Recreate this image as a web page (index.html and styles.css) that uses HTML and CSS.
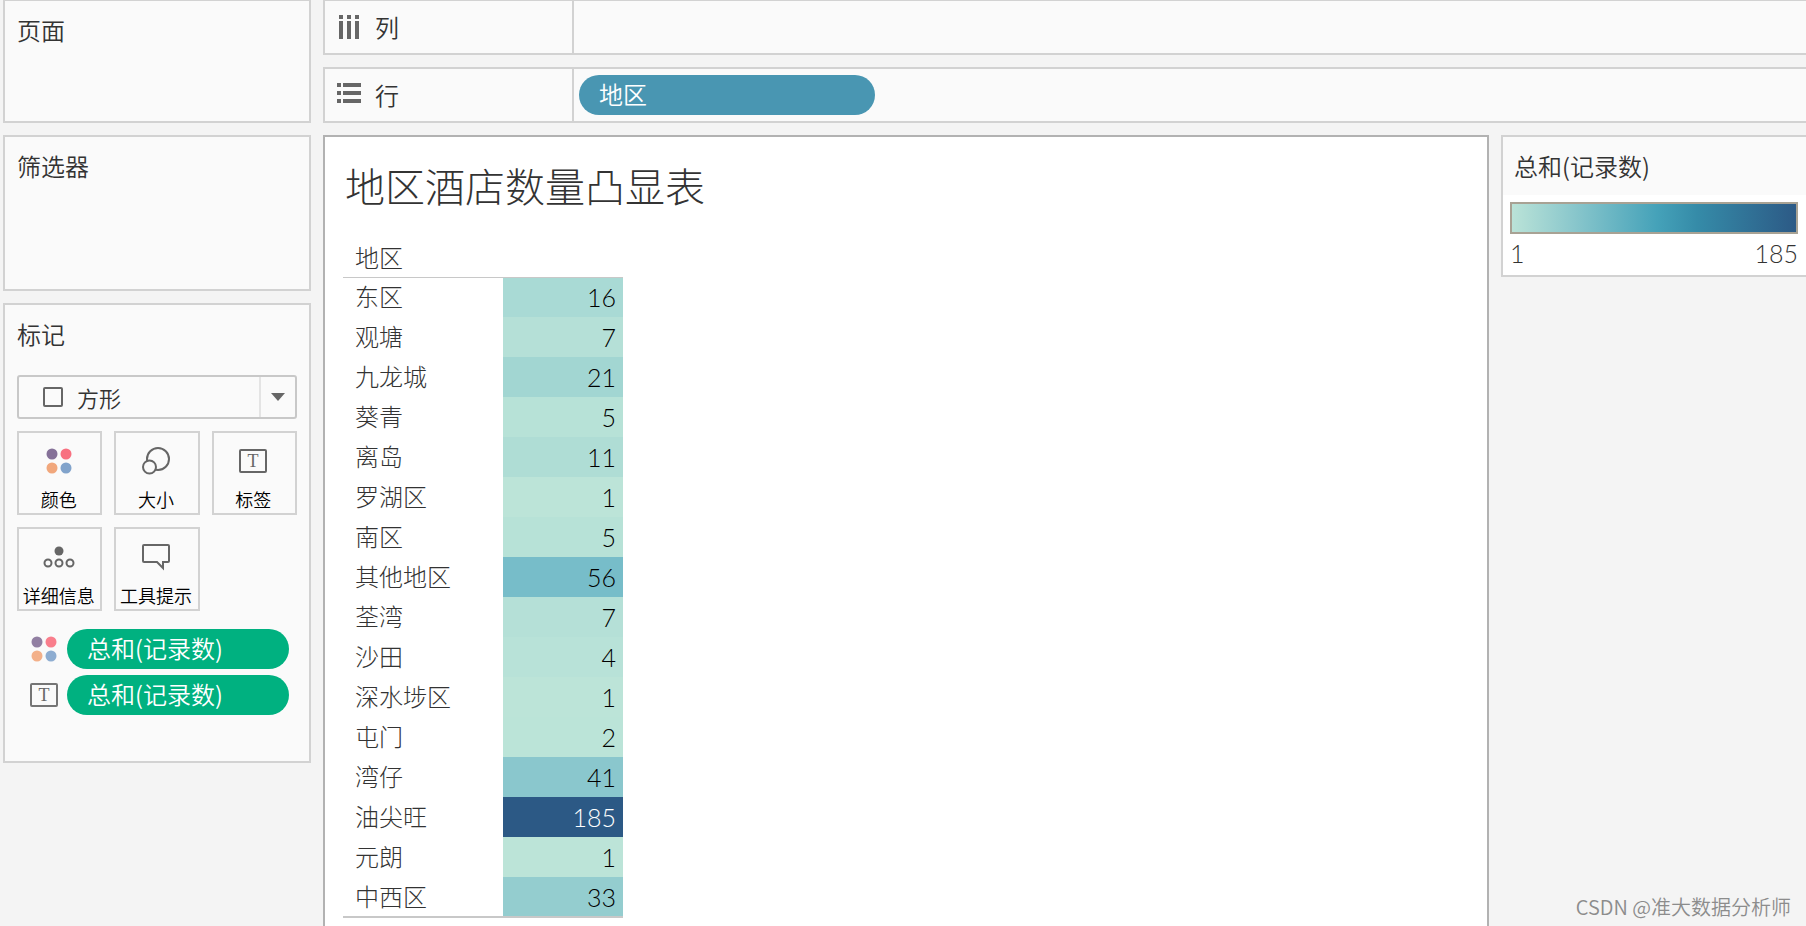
FILE: index.html
```html
<!DOCTYPE html>
<html lang="zh-CN">
<head>
    <meta charset="UTF-8">
    <meta name="viewport" content="width=device-width, initial-scale=1.0">
    <title>地区酒店数量凸显表</title>
    <link rel="stylesheet" href="styles.css">
</head>
<body>

    <div class="workspace">
        <aside class="sidebar">
            <section class="panel pages">
                <h2>页面</h2>
            </section>
            <section class="panel filters">
                <h2>筛选器</h2>
            </section>
            <section class="panel marks">
                <h2><label for="mark-type">标记</label></h2>
                <div class="mark-select">
                    <svg class="square-icon" width="20" height="20" viewBox="0 0 20 20"><rect x="1" y="1" width="18" height="18" rx="1" fill="none" stroke="#666" stroke-width="2"/></svg>
                    <select id="mark-type">
                        <option>方形</option>
                    </select>
                    <span class="arrow"><svg width="14" height="8" viewBox="0 0 14 8"><path d="M0 0h14L7 8z" fill="#666"/></svg></span>
                </div>
                <div class="mark-cards">
                    <button class="card">
                        <svg width="32" height="28" viewBox="0 0 32 28"><circle cx="9" cy="7" r="5.5" fill="#857198"/><circle cx="23" cy="7" r="5.5" fill="#f87080"/><circle cx="9" cy="21" r="5.5" fill="#f1a77c"/><circle cx="23" cy="21" r="5.5" fill="#81a3cb"/></svg>
                        颜色
                    </button>
                    <button class="card">
                        <svg width="32" height="28" viewBox="0 0 32 28"><g fill="#fafafa" stroke="#666" stroke-width="2"><circle cx="18" cy="12" r="11"/><circle cx="9.5" cy="20" r="6.5"/></g></svg>
                        大小
                    </button>
                    <button class="card">
                        <svg width="32" height="28" viewBox="0 0 32 28"><rect x="3" y="3" width="26" height="22" rx="1" fill="none" stroke="#666" stroke-width="2"/><text class="icon-text" x="16" y="20" text-anchor="middle">T</text></svg>
                        标签
                    </button>
                    <button class="card">
                        <svg width="32" height="28" viewBox="0 0 32 28"><circle cx="16" cy="8" r="4.5" fill="#666"/><g fill="none" stroke="#666" stroke-width="2"><circle cx="5" cy="20" r="3.5"/><circle cx="16" cy="20" r="3.5"/><circle cx="27" cy="20" r="3.5"/></g></svg>
                        详细信息
                    </button>
                    <button class="card">
                        <svg width="32" height="28" viewBox="0 0 32 28"><path d="M4 2h24a1 1 0 0 1 1 1v15a1 1 0 0 1-1 1h-5v6l-6-6H4a1 1 0 0 1-1-1V3a1 1 0 0 1 1-1z" fill="none" stroke="#666" stroke-width="2"/></svg>
                        工具提示
                    </button>
                </div>
                <div class="mark-pills">
                    <div class="mark-row">
                        <svg width="32" height="28" viewBox="0 0 32 28"><circle cx="9" cy="7" r="5.5" fill="#917fa2"/><circle cx="23" cy="7" r="5.5" fill="#f97e8c"/><circle cx="9" cy="21" r="5.5" fill="#f3b089"/><circle cx="23" cy="21" r="5.5" fill="#8eadd1"/></svg>
                        <button class="pill measure">总和(记录数)</button>
                    </div>
                    <div class="mark-row">
                        <svg width="32" height="28" viewBox="0 0 32 28"><rect x="3" y="3" width="26" height="22" rx="1" fill="none" stroke="#757575" stroke-width="2"/><text class="icon-text" x="16" y="20" text-anchor="middle">T</text></svg>
                        <button class="pill measure">总和(记录数)</button>
                    </div>
                </div>
            </section>
        </aside>

        <main class="content">
            <div class="shelf columns">
                <div class="shelf-name">
                    <svg width="24" height="24" viewBox="0 0 24 24" fill="#666"><path d="M2 0h4v4H2zM10 0h4v4h-4zM18 0h4v4h-4zM2 6h4v18H2zM10 6h4v18h-4zM18 6h4v18h-4z"/></svg>
                    列
                </div>
            </div>
            <div class="shelf rows">
                <div class="shelf-name">
                    <svg width="24" height="24" viewBox="0 0 24 24" fill="#666"><path d="M0 0h4v4H0zM6 0h18v4H6zM0 8h4v4H0zM6 8h18v4H6zM0 16h4v4H0zM6 16h18v4H6z"/></svg>
                    行
                </div>
                <div class="shelf-fields">
                    <button class="pill dimension">地区</button>
                </div>
            </div>

            <div class="sheet">
                <section class="view">
                    <h1>地区酒店数量凸显表</h1>
                    <table class="highlight-table">
                        <thead>
                            <tr><th>地区</th><td></td></tr>
                        </thead>
                        <tbody>
                            <tr><th>东区</th><td style="background: #a9dad5">16</td></tr>
                            <tr><th>观塘</th><td style="background: #b5e0d7">7</td></tr>
                            <tr><th>九龙城</th><td style="background: #a2d6d2">21</td></tr>
                            <tr><th>葵青</th><td style="background: #b7e2d7">5</td></tr>
                            <tr><th>离岛</th><td style="background: #afddd5">11</td></tr>
                            <tr><th>罗湖区</th><td style="background: #bce4d8">1</td></tr>
                            <tr><th>南区</th><td style="background: #b7e2d7">5</td></tr>
                            <tr><th>其他地区</th><td style="background: #77bdc9">56</td></tr>
                            <tr><th>荃湾</th><td style="background: #b5e0d7">7</td></tr>
                            <tr><th>沙田</th><td style="background: #b8e2d8">4</td></tr>
                            <tr><th>深水埗区</th><td style="background: #bce4d8">1</td></tr>
                            <tr><th>屯门</th><td style="background: #bbe4d8">2</td></tr>
                            <tr><th>湾仔</th><td style="background: #8ac7cd">41</td></tr>
                            <tr><th>油尖旺</th><td class="dark" style="background: #2c5985">185</td></tr>
                            <tr><th>元朗</th><td style="background: #bce4d8">1</td></tr>
                            <tr><th>中西区</th><td style="background: #94cdcf">33</td></tr>
                        </tbody>
                    </table>
                </section>

                <section class="legend">
                    <h2>总和(记录数)</h2>
                    <div class="legend-body">
                        <div class="ramp"></div>
                        <div class="range"><span>1</span><span>185</span></div>
                    </div>
                </section>
            </div>
        </main>
    </div>

    <div class="watermark">CSDN @准大数据分析师</div>

</body>
</html>
```
FILE: styles.css
```css
* {
    box-sizing: border-box;
}
body {
    margin: 0;
    font-family: "Noto Sans CJK SC", sans-serif;
    font-weight: 350;
    font-size: 24px;
    line-height: 32px;
    color: #333;
    background: #f4f4f4;
}
h1, h2 {
    margin: 0;
    font-weight: 350;
}
h2 {
    font-size: 24px;
    line-height: 32px;
}
svg {
    display: block;
    flex: none;
}
button, select {
    font-family: inherit;
    font-weight: 350;
    cursor: pointer;
}
.workspace {
    display: flex;
    gap: 12px;
    height: 100vh;
    padding-left: 3px;
    overflow: hidden;
}

/* left side */
.sidebar {
    flex: none;
    width: 308px;
    display: flex;
    flex-direction: column;
    gap: 12px;
}
.panel {
    flex: none;
    padding: 13px 12px;
    background: #fafafa;
    border: 2px solid #d2d2d2;
}
.pages {
    height: 123px;
    border-top-width: 1px;
}
.filters {
    height: 156px;
}
.marks {
    padding-bottom: 46px;
}
.mark-select {
    position: relative;
    margin: 25px 0 12px;
}
.mark-select select {
    display: block;
    width: 100%;
    height: 44px;
    padding: 0 50px 0 58px;
    font-size: 22px;
    color: #333;
    background: #fafafa;
    border: 2px solid #c8c8c8;
    border-radius: 3px;
    appearance: none;
}
.square-icon {
    position: absolute;
    left: 26px;
    top: 12px;
}
.arrow {
    position: absolute;
    top: 2px;
    right: 2px;
    bottom: 2px;
    width: 36px;
    display: flex;
    align-items: center;
    justify-content: center;
    border-left: 2px solid #e4e4e4;
    pointer-events: none;
}
.mark-cards {
    display: grid;
    grid-template-columns: repeat(3, 1fr);
    gap: 12px;
}
.card {
    display: flex;
    flex-direction: column;
    align-items: center;
    gap: 10px;
    height: 84px;
    padding: 14px 2px 0 0;
    font-size: 18px;
    line-height: 28px;
    white-space: nowrap;
    color: #000;
    background: #fafafa;
    border: 2px solid #d2d2d2;
}
.icon-text {
    font-family: "Liberation Serif", serif;
    font-size: 18px;
    font-weight: 400;
    fill: #666;
}
.mark-pills {
    display: flex;
    flex-direction: column;
    gap: 6px;
    padding: 18px 8px 0 11px;
}
.mark-row {
    display: flex;
    align-items: center;
    gap: 7px;
}
.pill {
    height: 40px;
    padding: 0 20px 2px;
    font-size: 24px;
    line-height: 38px;
    text-align: left;
    color: #fff;
    border: none;
    border-radius: 20px;
}
.measure {
    flex: 1;
    background: #00b180;
}
.dimension {
    width: 296px;
    background: #4996b2;
}

/* shelves */
.content {
    flex: 1;
    min-width: 0;
    display: flex;
    flex-direction: column;
    gap: 12px;
}
.shelf {
    flex: none;
    display: flex;
    height: 56px;
    background: #fafafa;
    border: 2px solid #d2d2d2;
    border-right: none;
}
.columns {
    height: 55px;
    border-top-width: 1px;
}
.shelf-name {
    display: flex;
    align-items: center;
    gap: 14px;
    width: 249px;
    padding-left: 12px;
    border-right: 2px solid #d2d2d2;
}
.shelf-fields {
    display: flex;
    align-items: center;
    padding-left: 5px;
}

/* sheet and legend */
.sheet {
    flex: 1;
    min-height: 0;
    display: flex;
    align-items: flex-start;
    gap: 12px;
}
.view {
    flex: 1;
    height: 100%;
    padding: 18px 18px 0;
    background: #fff;
    border: 2px solid #b2b2b2;
    border-bottom: none;
}
.view h1 {
    padding-left: 2px;
    font-size: 40px;
    font-weight: 300;
    line-height: 60px;
}
.highlight-table {
    width: 280px;
    margin-top: 24px;
    table-layout: fixed;
    border-collapse: collapse;
    border-bottom: 2px solid #c8c8c8;
}
.highlight-table th {
    width: 160px;
    height: 40px;
    padding: 0 0 2px 12px;
    font-size: 24px;
    line-height: 32px;
    font-weight: 300;
    text-align: left;
}
.highlight-table thead th {
    height: 38px;
}
.highlight-table td {
    padding: 0 7px 0 0;
    font-family: Lato, sans-serif;
    font-size: 25px;
    font-weight: 300;
    text-align: right;
    color: #000;
}
.highlight-table td.dark {
    color: #fff;
}
.highlight-table thead tr {
    border-bottom: 1px solid #c8c8c8;
}
.legend {
    flex: none;
    width: 305px;
    background: #fff;
    border: 2px solid #d2d2d2;
    border-right: none;
}
.legend h2 {
    padding: 13px 11px;
    background: #fafafa;
}
.legend-body {
    padding: 7px 8px 6px 7px;
}
.ramp {
    height: 32px;
    border: 2px solid #a8a294;
    background: linear-gradient(to right, #bce4d8, #8ac7cc 22%, #45a2b9 51%, #358ba8 65%, #2c5985);
    background-origin: border-box;
}
.range {
    display: flex;
    justify-content: space-between;
    padding-top: 3px;
    font-family: Lato, sans-serif;
    font-size: 25px;
    font-weight: 300;
}

.watermark {
    position: absolute;
    right: 15px;
    bottom: 4px;
    font-size: 20px;
    line-height: 30px;
    color: #8c8c8c;
}
```
